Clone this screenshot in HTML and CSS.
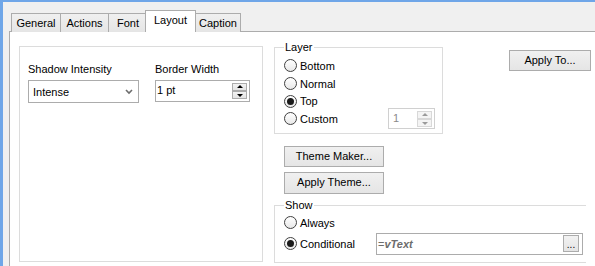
FILE: index.html
```html
<!DOCTYPE html>
<html>
<head lang="en">
    <meta charset="UTF-8">
    <title>Object Properties - Layout</title>
    <link rel="stylesheet" href="styles.css">
</head>
<body>
<div class="frame">
    <div class="tabs">
        <div class="tab t-general">General</div>
        <div class="tab t-actions">Actions</div>
        <div class="tab t-font">Font</div>
        <div class="tab t-layout active">Layout</div>
        <div class="tab t-caption">Caption</div>
    </div>
    <div class="pane">
        <div class="box">
            <div class="field">
                <div class="label">Shadow Intensity</div>
                <div class="select">
                    <span>Intense</span>
                    <svg class="chevron" width="8" height="6" viewBox="0 0 8 6"><path d="M1 1 L4 4 L7 1" fill="none" stroke="#6d6d6d" stroke-width="1.6"/></svg>
                </div>
            </div>
            <div class="field">
                <div class="label">Border Width</div>
                <div class="spin">
                    <span class="spin-text">1 pt</span>
                    <div class="arrows">
                        <div class="arrow up"></div>
                        <div class="arrow down"></div>
                    </div>
                </div>
            </div>
        </div>

        <div class="side">
            <div class="top-row">
                <fieldset class="group layer">
                    <legend>Layer</legend>
                    <div class="radio"><span class="dot"></span>Bottom</div>
                    <div class="radio"><span class="dot"></span>Normal</div>
                    <div class="radio"><span class="dot on"></span>Top</div>
                    <div class="radio custom">
                        <span><span class="dot"></span>Custom</span>
                        <div class="spin small off">
                            <span class="spin-text">1</span>
                            <div class="arrows">
                                <div class="arrow up"></div>
                                <div class="arrow down"></div>
                            </div>
                        </div>
                    </div>
                </fieldset>
                <div class="btn apply-to">Apply To...</div>
            </div>
            <div class="btn theme">Theme Maker...</div>
            <div class="btn theme second">Apply Theme...</div>
            <fieldset class="group show">
                <legend>Show</legend>
                <div class="radio"><span class="dot"></span>Always</div>
                <div class="radio cond">
                    <span class="cond-label"><span class="dot on"></span>Conditional</span>
                    <div class="expr">
                        <span class="expr-text">=<b>vText</b></span>
                        <div class="dots">...</div>
                    </div>
                </div>
            </fieldset>
        </div>
    </div>
</div>
</body>
</html>
```

FILE: styles.css
```css
html, body {
    margin: 0;
    height: 100%;
    overflow: hidden;
    background-color: #f0f0f0;
}

body {
    font-family: "Liberation Sans", Arial, sans-serif;
    font-size: 11px;
    color: #000000;
}

.frame {
    border-top: 2px solid #6fa6e8;
    border-left: 3px solid #6fa6e8;
    padding: 8px 0 0 6px;
    height: 100%;
    box-sizing: border-box;
    overflow: hidden;
}

/* tab strip */
.tabs {
    display: flex;
    align-items: flex-end;
    margin-left: 2px;
    height: 22px;
}

.tab {
    height: 19px;
    line-height: 19px;
    box-sizing: border-box;
    text-align: center;
    border: 1px solid #acacac;
    border-bottom: none;
    background: linear-gradient(#f0f0f0, #e5e5e5);
    margin-right: -1px;
}

.t-general { width: 50px; }
.t-actions { width: 49px; }
.t-font { width: 40px; }
.t-caption { width: 46px; }

.tab.active {
    position: relative;
    z-index: 1;
    width: 51px;
    height: 22px;
    line-height: 19px;
    margin: 0 -1px 0 -2px;
    background: #ffffff;
}

.pane {
    display: flex;
    align-items: flex-start;
    width: 586px;
    height: 235px;
    box-sizing: border-box;
    background: #ffffff;
    border-top: 1px solid #acacac;
    border-left: 1px solid #acacac;
    padding: 9px 0 0 9px;
    margin-top: -1px;
}

/* left box */
.box {
    display: flex;
    gap: 16px;
    width: 244px;
    height: 216px;
    box-sizing: border-box;
    margin-top: 5px;
    border: 1px solid #dcdcdc;
    padding: 15px 0 0 8px;
}

.label {
    line-height: 14px;
    height: 18px;
}

.select {
    display: flex;
    align-items: center;
    justify-content: space-between;
    width: 111px;
    height: 23px;
    box-sizing: border-box;
    border: 1px solid #acacac;
    padding: 0 5px 0 4px;
}

.chevron {
    margin-top: 1px;
}

.spin {
    display: flex;
    justify-content: space-between;
    width: 95px;
    height: 22px;
    box-sizing: border-box;
    border: 1px solid #acacac;
    padding: 2px 1px 0 1px;
}

.spin-text {
    line-height: 14px;
}

.arrows {
    display: flex;
    flex-direction: column;
    margin-right: 1px;
}

.arrow {
    position: relative;
    width: 15px;
    height: 8px;
    box-sizing: border-box;
    border: 1px solid #acacac;
    background: linear-gradient(#f2f2f2, #e4e4e4);
}

.arrow::after {
    content: "";
    position: absolute;
    left: 4px;
    top: 1px;
    border-left: 3px solid transparent;
    border-right: 3px solid transparent;
}

.arrow.up::after {
    border-bottom: 3px solid #000000;
}

.arrow.down::after {
    top: 2px;
    border-top: 3px solid #000000;
}

/* right side */
.side {
    margin-left: 11px;
    display: flex;
    flex-direction: column;
    align-items: flex-start;
}

.top-row {
    display: flex;
    align-items: flex-start;
}

.group {
    margin: 0;
    border: 1px solid #dcdcdc;
    padding: 0 0 0 9px;
}

.group legend {
    padding: 0 1px;
    line-height: 13px;
}

.layer {
    width: 169px;
    height: 93px;
    box-sizing: border-box;
    padding-top: 3px;
}

.radio {
    display: flex;
    align-items: center;
    height: 17.7px;
}

.dot {
    position: relative;
    display: inline-block;
    width: 13px;
    height: 13px;
    box-sizing: border-box;
    border: 1px solid #404040;
    border-radius: 50%;
    background: linear-gradient(#ffffff, #e8e8e8);
    margin-right: 3px;
}

.dot.on::after {
    content: "";
    position: absolute;
    left: 2px;
    top: 2px;
    width: 7px;
    height: 7px;
    border-radius: 50%;
    background: #1a1a1a;
}

.radio.custom {
    justify-content: space-between;
    padding-right: 7px;
}

.radio.custom > span, .cond-label {
    display: flex;
    align-items: center;
}

.spin.small {
    flex: none;
    width: 47px;
    height: 21px;
    padding-left: 4px;
}

.spin.off {
    border-color: #d0d0d0;
    color: #8a8a8a;
}

.spin.off .arrow {
    border-color: #d8d8d8;
    background: #f4f4f4;
}

.spin.off .arrow.up::after {
    border-bottom-color: #9a9a9a;
}

.spin.off .arrow.down::after {
    border-top-color: #9a9a9a;
}

.btn {
    height: 21px;
    line-height: 19px;
    box-sizing: border-box;
    text-align: center;
    border: 1px solid #acacac;
    background: linear-gradient(#f0f0f0, #e5e5e5);
}

.apply-to {
    width: 82px;
    margin: 9px 0 0 66px;
}

.theme {
    width: 100px;
    margin: 12px 0 0 10px;
}

.theme.second {
    margin-top: 5px;
    height: 22px;
}

.show {
    width: 312px;
    height: 64px;
    box-sizing: border-box;
    border-right: none;
    margin-top: 5px;
    padding-top: 2px;
}

.cond {
    height: 22px;
    margin-top: 1px;
}

.cond-label {
    width: 92px;
}

.expr {
    display: flex;
    align-items: center;
    justify-content: space-between;
    width: 207px;
    height: 22px;
    box-sizing: border-box;
    border: 1px solid #acacac;
    padding: 0 3px 0 1px;
}

.expr-text {
    color: #6d6d6d;
}

.expr-text b {
    font-style: italic;
}

.dots {
    width: 16px;
    height: 17px;
    box-sizing: border-box;
    border: 1px solid #acacac;
    background: linear-gradient(#f2f2f2, #e4e4e4);
    text-align: center;
    line-height: 17px;
    font-size: 10px;
}
```
